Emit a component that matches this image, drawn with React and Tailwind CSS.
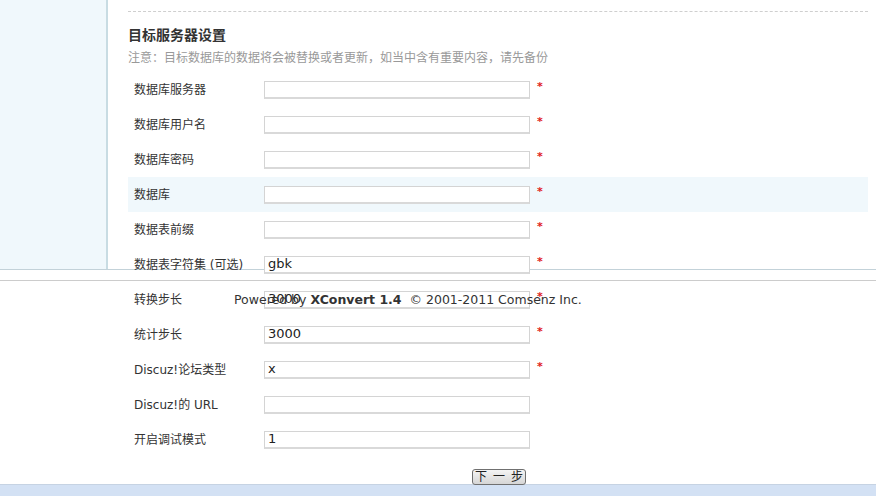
import React from 'react';

const rows = [
  { label: '数据库服务器', value: '', required: true },
  { label: '数据库用户名', value: '', required: true },
  { label: '数据库密码', value: '', required: true },
  { label: '数据库', value: '', required: true, highlight: true },
  { label: '数据表前缀', value: '', required: true },
  { label: '数据表字符集 (可选)', value: 'gbk', required: true },
  { label: '转换步长', value: '3000', required: true },
  { label: '统计步长', value: '3000', required: true },
  { label: 'Discuz!论坛类型', value: 'x', required: true },
  { label: 'Discuz!的 URL', value: '', required: false },
  { label: '开启调试模式', value: '1', required: false },
];

const FormRow = ({ label, value, required, highlight }) => (
  <div className={`flex items-center h-[35px] ${highlight ? 'bg-[#f0f8fc]' : ''}`}>
    <div className="w-[136px] shrink-0 pl-[6px] text-[12px] text-[#333]">{label}</div>
    <input
      className="w-[266px] h-[18px] shrink-0 border border-[#d4d4d4] border-b-2 border-b-[#d9d9d9] bg-white px-[3px] text-[13px] text-[#222] outline-none"
      type="text"
      defaultValue={value}
    />
    {required && <span className="ml-[7px] -mt-[4px] text-[11px] text-[#e02020] font-bold">*</span>}
  </div>
);

const App = () => {
  return (
    <div className="w-[876px] h-[496px] overflow-hidden bg-[#d3e1f4] font-['DejaVu_Sans','Noto_Sans_CJK_SC',sans-serif]">
      <div className="h-[485px] bg-white border-b border-b-[#c6d3e3]">
        <div className="h-[270px] flex border-b border-b-[#c3d2d9]">
          <div className="w-[108px] shrink-0 bg-[#f0f8fc] border-r-2 border-r-[#c8dce3]" />
          <div className="flex-1 pl-[20px] pr-[8px]">
            <div className="mt-[11px] border-t border-dashed border-t-[#cfcfcf]" />
            <h2 className="mt-[13px] text-[14px] font-bold text-[#333] leading-[20px]">目标服务器设置</h2>
            <p className="mt-[4px] text-[12px] text-[#999] leading-[18px]">注意：目标数据库的数据将会被替换或者更新，如当中含有重要内容，请先备份</p>
            <div className="mt-[5px]">
              {rows.map((r) => (
                <FormRow key={r.label} {...r} />
              ))}
            </div>
            <div className="pl-[344px] mt-[12px]">
              <button
                type="button"
                className="w-[54px] h-[16px] flex items-center justify-center gap-[6px] border border-[#707070] rounded-[3px] bg-gradient-to-b from-[#f4f4f4] to-[#d6d6d6] text-[12px] leading-none text-[#222]"
              >
                <span>下</span>
                <span>一</span>
                <span>步</span>
              </button>
            </div>
          </div>
        </div>
        <div className="mt-[10px] border-t border-t-[#cccccc] pt-[9px] pl-[234px] text-[12.5px] leading-[19px] text-[#333]">
          Powered by <b>XConvert 1.4</b> &nbsp;© 2001-2011 Comsenz Inc.
        </div>
      </div>
    </div>
  );
};

export default App;
